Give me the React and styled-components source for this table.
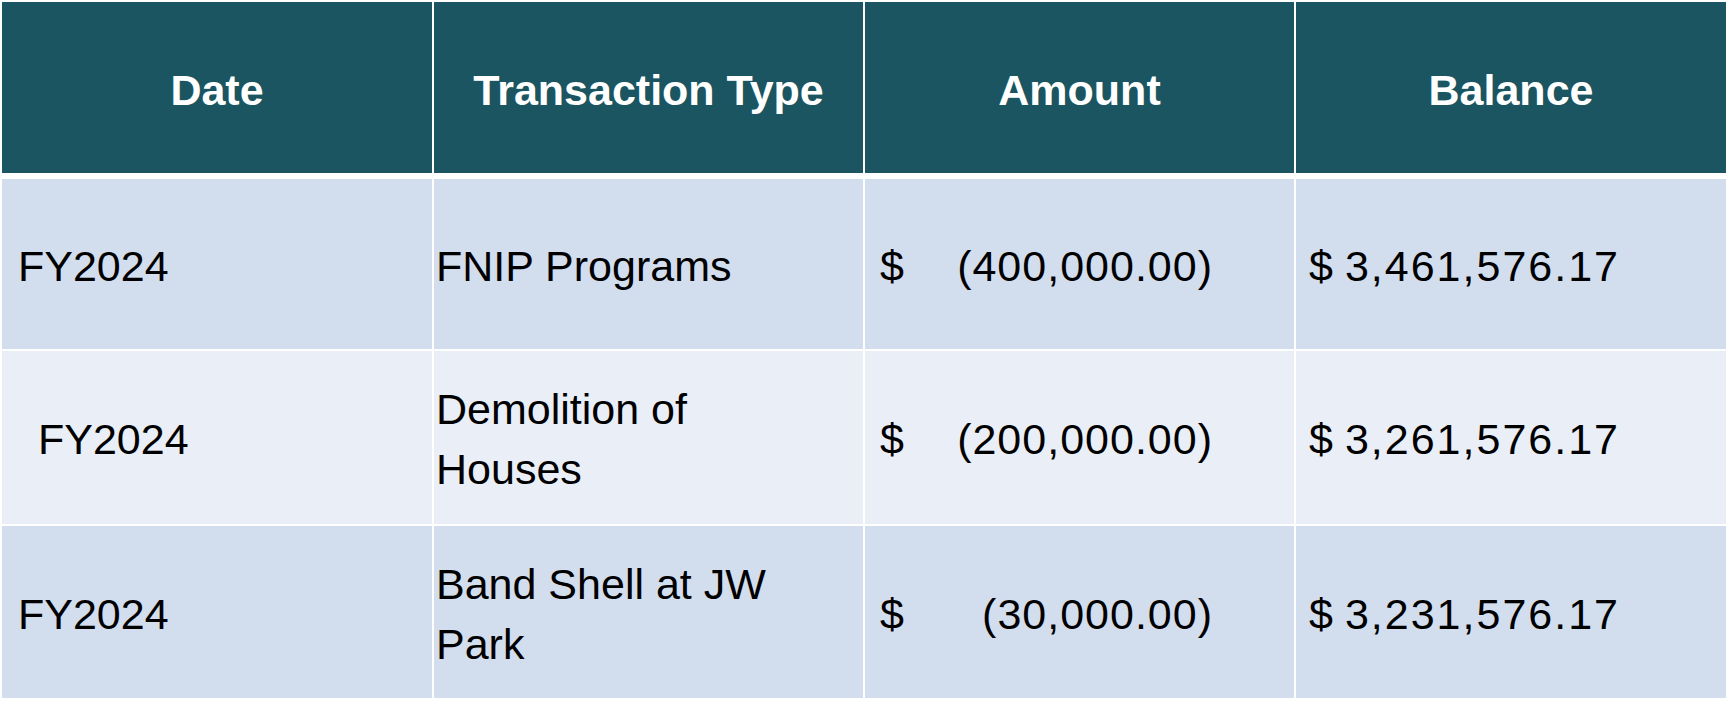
import styled, { createGlobalStyle } from "styled-components";

const Global = createGlobalStyle`
  html, body {
    margin: 0;
    padding: 0;
    background: #ffffff;
  }
  body {
    font-family: "Liberation Sans", Arial, sans-serif;
  }
`;

const Table = styled.div`
  display: grid;
  grid-template-columns: 430px 429px 429px 430px;
  grid-template-rows: 171px 174px 173px 172px;
  column-gap: 2px;
  row-gap: 2px;
  padding: 2px 0 0 2px;
  width: 1726px;
  box-sizing: border-box;
  background: #ffffff;
`;

const HeadCell = styled.div`
  background: #1b5561;
  color: #ffffff;
  font-weight: 700;
  font-size: 43px;
  display: flex;
  align-items: center;
  justify-content: center;
  padding-top: 6px;
  box-sizing: border-box;
`;

const Cell = styled.div`
  background: ${(p) => (p.$alt ? "#e9eef7" : "#d2ddee")};
  color: #000000;
  font-size: 43px;
  line-height: 60px;
  display: flex;
  align-items: center;
  padding-left: ${(p) => p.$pad || 0}px;
  padding-right: ${(p) => p.$padRight || 0}px;
  padding-top: 3px;
  box-sizing: border-box;
  margin-top: ${(p) => (p.$first ? 4 : 0)}px;
`;

const Money = styled(Cell)`
  justify-content: space-between;
`;

const Figure = styled.span`
  letter-spacing: ${(p) => p.$spread}px;
  margin-right: -${(p) => p.$spread}px;
`;

const rows = [
  {
    date: "FY2024",
    indent: 16,
    type: ["FNIP Programs"],
    amount: "(400,000.00)",
    balance: "3,461,576.17",
  },
  {
    date: "FY2024",
    indent: 36,
    type: ["Demolition of", "Houses"],
    amount: "(200,000.00)",
    balance: "3,261,576.17",
  },
  {
    date: "FY2024",
    indent: 16,
    type: ["Band Shell at JW", "Park"],
    amount: "(30,000.00)",
    balance: "3,231,576.17",
  },
];

export default function App() {
  return (
    <>
      <Global />
      <Table>
        <HeadCell>Date</HeadCell>
        <HeadCell>Transaction Type</HeadCell>
        <HeadCell>Amount</HeadCell>
        <HeadCell>Balance</HeadCell>
        {rows.map((r, i) => {
          const alt = i === 1;
          const first = i === 0;
          return [
            <Cell key={`d${i}`} $alt={alt} $first={first} $pad={r.indent}>
              {r.date}
            </Cell>,
            <Cell key={`t${i}`} $alt={alt} $first={first} $pad={2}>
              <div>
                {r.type.map((line) => (
                  <div key={line}>{line}</div>
                ))}
              </div>
            </Cell>,
            <Money key={`a${i}`} $alt={alt} $first={first} $pad={15} $padRight={82}>
              <span>$</span>
              <Figure $spread={1}>{r.amount}</Figure>
            </Money>,
            <Money key={`b${i}`} $alt={alt} $first={first} $pad={13} $padRight={108}>
              <span>$</span>
              <Figure $spread={2}>{r.balance}</Figure>
            </Money>,
          ];
        })}
      </Table>
    </>
  );
}
